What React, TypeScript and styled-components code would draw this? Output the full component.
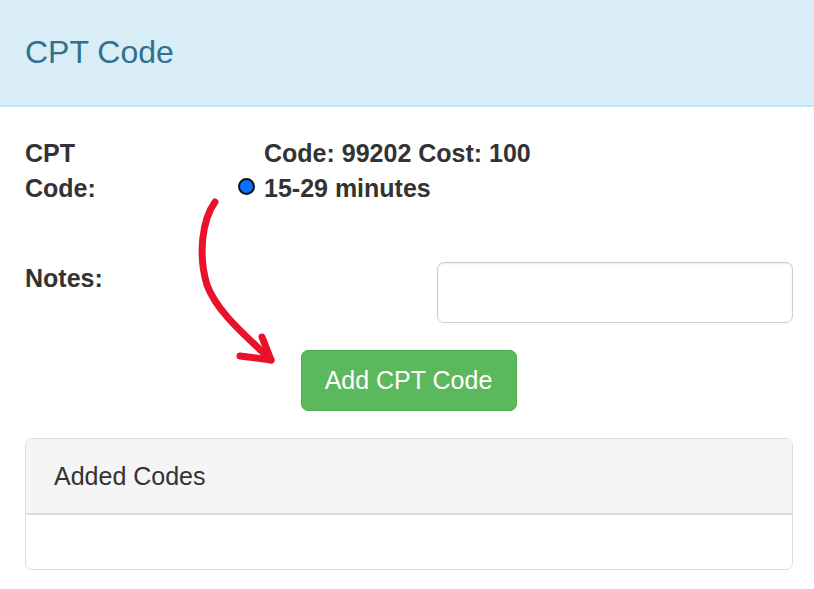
import styled, { createGlobalStyle } from "styled-components";

const GlobalStyle = createGlobalStyle`
  body {
    margin: 0;
    background: #fff;
    font-family: "Liberation Sans", Arial, sans-serif;
    color: #333;
  }
  * {
    box-sizing: border-box;
  }
`;

const Page = styled.div`
  position: relative;
  width: 814px;
  min-height: 589px;
`;

const Header = styled.div`
  background: #d9edf7;
  border-bottom: 2px solid #bce8f1;
  padding: 35px 25px;
`;

const Title = styled.h4`
  margin: 0;
  font-size: 32px;
  line-height: 35px;
  font-weight: 400;
  color: #31708f;
`;

const Body = styled.div`
  padding: 29px 21px 0 25px;
`;

const FieldRow = styled.div`
  display: grid;
  grid-template-columns: 212px 1fr;
  font-size: 25px;
  line-height: 35px;
`;

const NotesRow = styled.div`
  display: grid;
  grid-template-columns: 412px 1fr;
  margin-top: 55px;
  font-size: 25px;
  line-height: 35px;
`;

const Label = styled.label`
  font-weight: 700;
  max-width: 110px;
`;

const Value = styled.div`
  font-weight: 700;
`;

const FirstLine = styled.div`
  padding-left: 27px;
`;

const RadioLine = styled.div`
  display: flex;
  align-items: center;
  padding-left: 1px;
`;

const Radio = styled.span`
  width: 17px;
  height: 17px;
  margin-right: 9px;
  margin-top: -4px;
  border-radius: 50%;
  border: 2.5px solid #111;
  background: #0b6efd;
  flex-shrink: 0;
`;

const TextInput = styled.textarea`
  display: block;
  width: 356px;
  height: 61px;
  border: 1.5px solid #ccc;
  border-radius: 7px;
  box-shadow: inset 0 1px 2px rgba(0, 0, 0, 0.075);
  resize: none;
  font: inherit;
  margin-top: 1px;
`;

const ButtonRow = styled.div`
  display: flex;
  justify-content: center;
  margin-top: 27px;
  padding-left: 1px;
  padding-right: 2px;
`;

const AddButton = styled.button`
  width: 216px;
  height: 61px;
  border: 1px solid #4cae4c;
  border-radius: 7px;
  background: #5cb85c;
  color: #fff;
  font-family: "Liberation Sans", Arial, sans-serif;
  font-size: 25px;
  cursor: pointer;
`;

const Panel = styled.div`
  margin-top: 27px;
  border: 1.5px solid #ddd;
  border-radius: 7px;
  overflow: hidden;
`;

const PanelHeading = styled.div`
  height: 76px;
  display: flex;
  align-items: center;
  padding: 0 28px;
  background: #f5f5f5;
  border-bottom: 2px solid #ddd;
  font-size: 25px;
  color: #333;
`;

const PanelBody = styled.div`
  height: 54px;
`;

const Annotation = styled.svg`
  position: absolute;
  left: 190px;
  top: 195px;
  width: 100px;
  height: 180px;
  overflow: visible;
  pointer-events: none;
`;

export default function App() {
  return (
    <Page>
      <GlobalStyle />
      <Header>
        <Title>CPT Code</Title>
      </Header>
      <Body>
        <FieldRow>
          <Label>CPT Code:</Label>
          <Value>
            <FirstLine>Code: 99202 Cost: 100</FirstLine>
            <RadioLine>
              <Radio />
              15-29 minutes
            </RadioLine>
          </Value>
        </FieldRow>
        <NotesRow>
          <Label>Notes:</Label>
          <TextInput />
        </NotesRow>
        <ButtonRow>
          <AddButton>Add CPT Code</AddButton>
        </ButtonRow>
        <Panel>
          <PanelHeading>Added Codes</PanelHeading>
          <PanelBody />
        </Panel>
      </Body>
      <Annotation viewBox="0 0 100 180">
        <g fill="none" stroke="#e8122b" strokeWidth="7" strokeLinecap="round" strokeLinejoin="round">
          <path d="M25 7 C 12 25, 8 60, 17 90 C 27 117, 55 140, 80 164" />
          <path d="M50 161 L 81 165" />
          <path d="M72 142 L 81 165" />
        </g>
      </Annotation>
    </Page>
  );
}
